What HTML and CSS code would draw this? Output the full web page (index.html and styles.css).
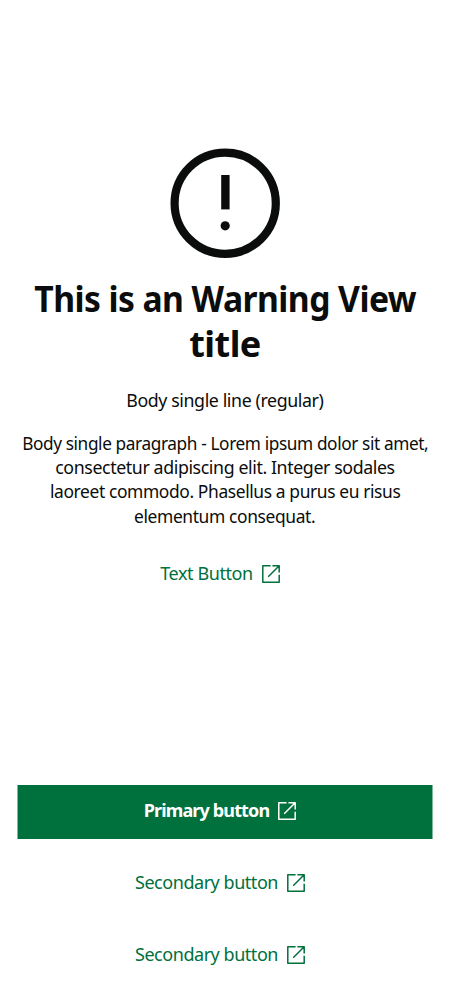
FILE: index.html
```html
<!DOCTYPE html>
<html lang="en">
<head>
<meta charset="utf-8">
<title>Warning View</title>
<link rel="stylesheet" href="styles.css">
</head>
<body>
<svg class="symbols" aria-hidden="true">
  <symbol id="external" viewBox="0 0 20 20">
    <path d="M9.6 1.8H1.8V18.2H18.2V10.8M18.2 8.6V1.8H11.4M18.2 1.8L7.2 12.8" fill="none" stroke="currentColor" stroke-width="1.5" stroke-linejoin="round"/>
  </symbol>
</svg>
<main class="screen">
  <section class="content">
    <svg class="warning" viewBox="0 0 110 110" role="img" aria-label="Warning">
      <circle cx="55.2" cy="55.2" r="50.6" fill="none" stroke="currentColor" stroke-width="8.2"/>
      <path d="M51.2 27h8.4v34.4h-8.4z" fill="currentColor"/>
      <circle cx="55.2" cy="77.8" r="4.6" fill="currentColor"/>
    </svg>
    <h1 class="title"><span class="t1">This is an Warning View</span><br><span class="t2">title</span></h1>
    <p class="body"><span class="b0">Body single line (regular)</span></p>
    <p class="body paragraph"><span class="b1">Body single paragraph - Lorem ipsum dolor sit amet,</span><br><span class="b2">consectetur adipiscing elit. Integer sodales</span><br><span class="b3">laoreet commodo. Phasellus a purus eu risus</span><br><span class="b4">elementum consequat.</span></p>
    <a class="button text"><span class="label-text">Text Button</span><svg class="icon"><use href="#external"/></svg></a>
  </section>
  <footer class="actions">
    <a class="button primary"><span class="label-primary">Primary button</span><svg class="icon"><use href="#external"/></svg></a>
    <a class="button secondary"><span class="label-secondary">Secondary button</span><svg class="icon"><use href="#external"/></svg></a>
    <a class="button secondary"><span class="label-secondary">Secondary button</span><svg class="icon"><use href="#external"/></svg></a>
  </footer>
</main>
</body>
</html>
```
FILE: styles.css
```css
* { box-sizing: border-box; }
body { margin: 0; background: #fff; color: #0b0c0c; font: 18px/24px "Noto Sans", sans-serif; }
.symbols { display: none; }
.screen { height: 1000px; display: flex; flex-direction: column; justify-content: space-between; padding: 148px 17px 19px; }
.content { display: flex; flex-direction: column; align-items: center; text-align: center; white-space: nowrap; }
.warning { width: 110px; height: 110px; display: block; }
.title { margin: 18px 0 22px; font-size: 36px; line-height: 45px; font-weight: 700; }
.title span, .body span { display: inline-block; }
.body { margin: 0 0 19px; }
.paragraph { line-height: 24.2px; }
.button { display: flex; align-items: center; justify-content: center; color: #00703c; white-space: nowrap; }
.icon { width: 20px; height: 20px; margin: 2px 0 0 8px; flex: none; }
.text { margin-top: 14px; height: 24px; padding-right: 9px; }
.actions { display: flex; flex-direction: column; gap: 18px; }
.actions .button { height: 54px; padding-right: 9px; }
.actions .primary { margin-bottom: -2px; padding-bottom: 4px; }
.primary { background: #00703c; background-clip: padding-box; border: solid rgba(0, 112, 60, .5); border-width: 0 1px; color: #fff; font-weight: 700; }
.t1 { letter-spacing: -0.6px; transform: scaleX(.935); }
.t2 { letter-spacing: -0.5px; }
.b0, .b1, .b2, .b3, .b4, .label-text, .label-secondary { letter-spacing: -0.4px; }
.b0 { transform: scaleX(.987); }
.b1 { transform: scaleX(.957); }
.b2 { transform: scaleX(.987); }
.b3 { transform: scaleX(.967); }
.b4 { transform: scaleX(.968); }
.label-secondary { letter-spacing: -0.46px; }
.label-primary { letter-spacing: -0.85px; }
```
